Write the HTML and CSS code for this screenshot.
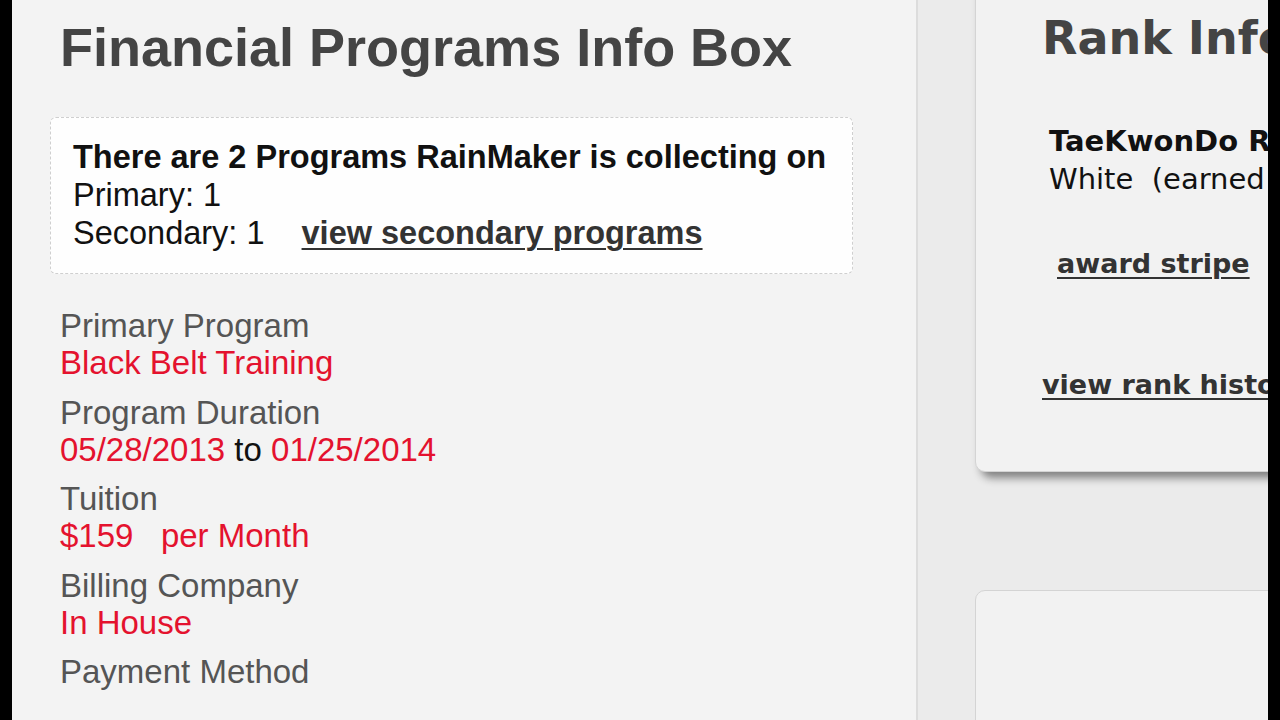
FILE: index.html
```html
<!DOCTYPE html>
<html lang="en">
<head>
  <meta charset="UTF-8">
  <meta name="viewport" content="width=device-width, initial-scale=1.0">
  <title>Student Profile</title>
  <link rel="stylesheet" href="styles.css">
</head>
<body>
  <div class="frame">
    <!-- Financial programs -->
    <div class="main-panel">
      <h1 class="panel-title">Financial Programs Info Box</h1>

      <div class="summary-box">
        <div class="summary-head">There are 2 Programs RainMaker is collecting on</div>
        <div>Primary: 1</div>
        <div>Secondary: 1 <a href="#" class="summary-link">view secondary programs</a></div>
      </div>

      <div class="fields">
        <div class="field">
          <div class="field-label">Primary Program</div>
          <div class="field-value">Black Belt Training</div>
        </div>
        <div class="field">
          <div class="field-label">Program Duration</div>
          <div class="field-value">05/28/2013 <span class="plain">to</span> 01/25/2014</div>
        </div>
        <div class="field">
          <div class="field-label">Tuition</div>
          <div class="field-value">$159 &nbsp; per Month</div>
        </div>
        <div class="field">
          <div class="field-label">Billing Company</div>
          <div class="field-value">In House</div>
        </div>
        <div class="field">
          <div class="field-label">Payment Method</div>
          <div class="field-value"></div>
        </div>
      </div>
    </div>

    <!-- Side cards -->
    <div class="side-panel">
      <div class="card rank-card">
        <h2 class="card-title">Rank Info</h2>
        <div class="rank-current">
          <div class="rank-style">TaeKwonDo Rank</div>
          <div>White &nbsp;(earned 05/28/2013)</div>
        </div>
        <a href="#" class="card-link stripe-link">award stripe</a>
        <a href="#" class="card-link history-link">view rank history</a>
      </div>

      <div class="card next-card"></div>
    </div>
  </div>
</body>
</html>
```

FILE: styles.css
```css
body {
  margin: 0;
  background-color: #000;
}

.frame {
  margin-left: 12px;
  width: 1256px;
  height: 720px;
  overflow: hidden;
  display: flex;
  background-color: #ebebeb;
}

.main-panel {
  width: 906px;
  flex-shrink: 0;
  box-sizing: border-box;
  padding: 16px 0 0 38px;
  background-color: #f3f3f3;
  border-right: 2px solid #dcdcdc;
  font-family: "Liberation Sans", Arial, sans-serif;
}

.panel-title {
  margin: 0 0 39px 10px;
  font-size: 54px;
  line-height: 62px;
  font-weight: bold;
  color: #444;
}

.summary-box {
  width: 803px;
  box-sizing: border-box;
  padding: 20px 22px 21px;
  background-color: #fefefe;
  border: 1px dashed #cfcfcf;
  border-radius: 6px;
  font-size: 32.5px;
  line-height: 38px;
  color: #111;
}

.summary-head {
  font-weight: bold;
}

.summary-link {
  margin-left: 28px;
  font-weight: bold;
  color: #333;
  text-decoration-thickness: 2px;
  text-underline-offset: 4px;
}

.fields {
  margin: 33px 0 0 10px;
}

.field {
  margin-bottom: 12.5px;
  font-size: 33px;
  line-height: 37px;
}

.field-label {
  color: #555;
}

.field-value {
  min-height: 37px;
  color: #e4122e;
}

.field-value .plain {
  color: #111;
}

.side-panel {
  flex: 1;
  padding-left: 57px;
  font-family: "DejaVu Sans", Verdana, sans-serif;
}

.card {
  width: 500px;
  box-sizing: border-box;
  background-color: #f2f2f2;
  border: 1px solid #d4d4d4;
  border-radius: 10px;
}

.rank-card {
  margin-top: -20px;
  padding: 31px 0 67px 66px;
  box-shadow: 6px 6px 8px rgba(0, 0, 0, 0.45);
}

.card-title {
  margin: 0 0 58px;
  font-size: 46px;
  line-height: 52px;
  font-weight: bold;
  color: #444;
  white-space: nowrap;
}

.rank-current {
  margin-left: 7px;
  font-size: 29px;
  line-height: 38px;
  color: #111;
  white-space: nowrap;
}

.rank-style {
  font-weight: bold;
}

.card-link {
  display: block;
  font-size: 27px;
  line-height: 38px;
  font-weight: bold;
  color: #333;
  white-space: nowrap;
  text-decoration-thickness: 2px;
  text-underline-offset: 4px;
}

.stripe-link {
  margin: 47px 0 0 15px;
}

.history-link {
  margin-top: 83px;
}

.next-card {
  margin-top: 118px;
  height: 300px;
}
```
